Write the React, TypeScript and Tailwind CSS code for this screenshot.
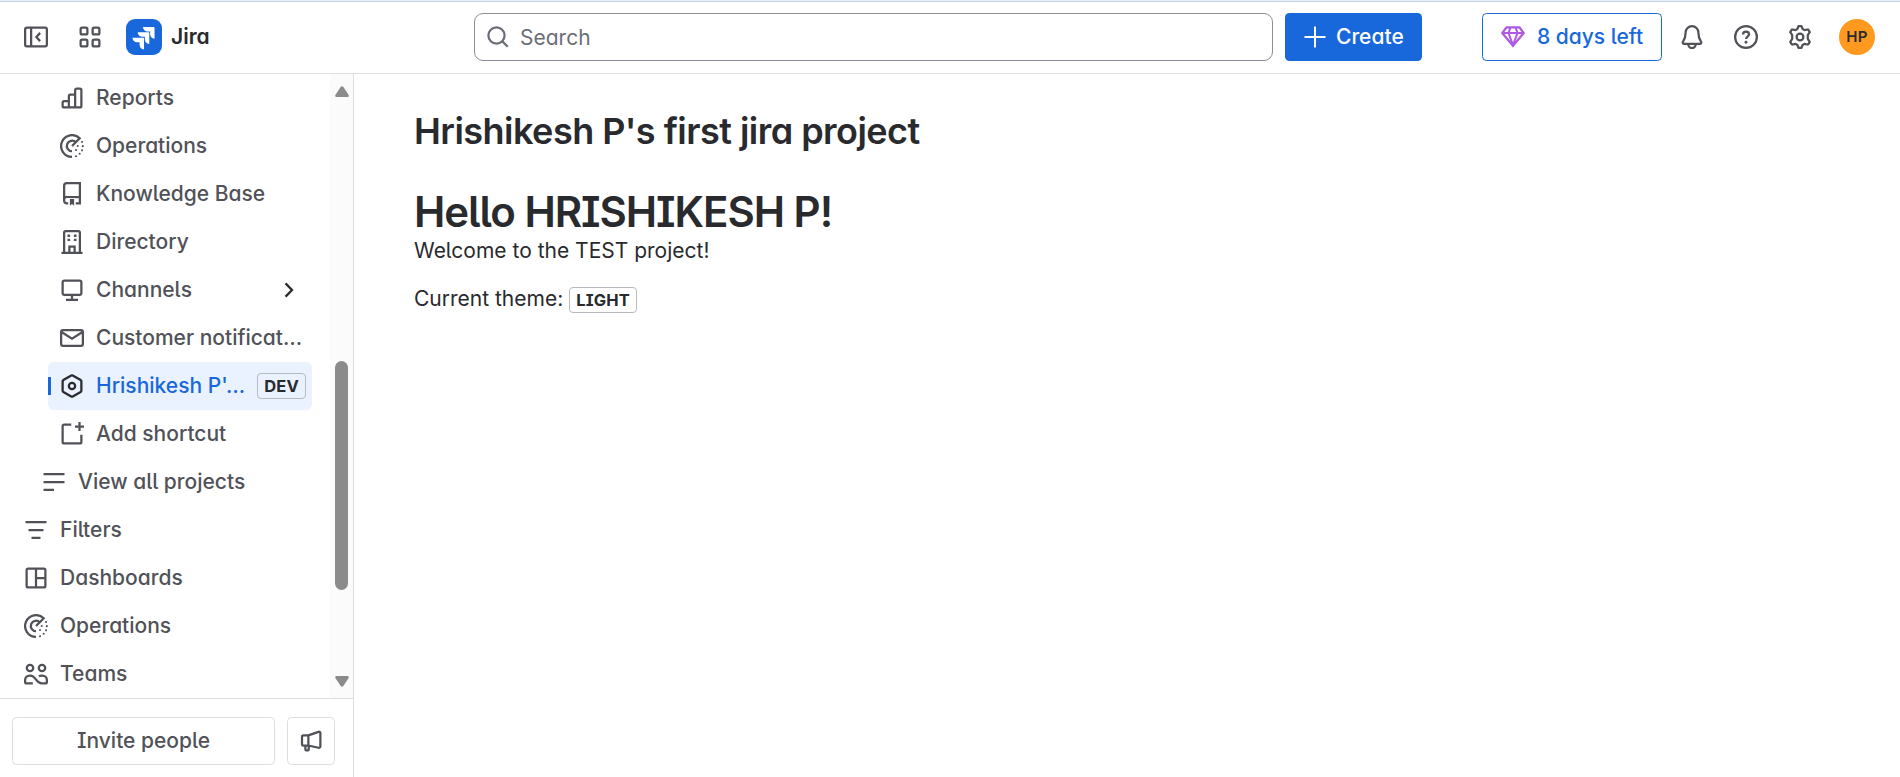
import type { ReactNode } from 'react';

type IconProps = { children: ReactNode; className?: string };

// All icons share a 16 unit grid with 1.5 unit strokes
function Icon({ children, className = 'text-[#505258]' }: IconProps) {
  return (
    <svg
      viewBox="0 0 16 16"
      fill="none"
      stroke="currentColor"
      strokeWidth={1.5}
      className={`w-6 h-6 shrink-0 ${className}`}
    >
      {children}
    </svg>
  );
}

const icons = {
  collapse: (
    <>
      <rect x="0.75" y="1.75" width="14.5" height="12.5" rx="1.25" />
      <path d="M4.75 1.75v12.5M10.75 5.25 8.25 8l2.5 2.75" />
    </>
  ),
  apps: (
    <>
      <rect x="1.75" y="1.75" width="4.5" height="4.5" rx="1" />
      <rect x="9.75" y="1.75" width="4.5" height="4.5" rx="1" />
      <rect x="1.75" y="9.75" width="4.5" height="4.5" rx="1" />
      <rect x="9.75" y="9.75" width="4.5" height="4.5" rx="1" />
    </>
  ),
  reports: (
    <path d="M5.9 14.25V10H2.75a1 1 0 0 0-1 1v2.25a1 1 0 0 0 1 1h10.5a1 1 0 0 0 1-1V2.75a1 1 0 0 0-1-1h-2.15a1 1 0 0 0-1 1v11.5M10.1 5.75H6.9a1 1 0 0 0-1 1V10" />
  ),
  operations: (
    <>
      <path d="M8 15.25A7.25 7.25 0 1 1 13.13 2.87L8 8" />
      <path d="M8 11.5A3.5 3.5 0 1 1 10.5 5.5" />
      <g fill="currentColor" stroke="none">
        <circle cx="14.7" cy="5.3" r=".7" />
        <circle cx="15.2" cy="8.1" r=".7" />
        <circle cx="14.7" cy="10.9" r=".7" />
        <circle cx="13.1" cy="13.2" r=".7" />
        <circle cx="10.7" cy="14.8" r=".7" />
        <circle cx="11.8" cy="8" r=".7" />
        <circle cx="10.7" cy="10.7" r=".7" />
      </g>
    </>
  ),
  knowledge: (
    <>
      <path d="M5.5 14.25h-1a1.75 1.75 0 0 1-1.75-1.75V2.5A1.75 1.75 0 0 1 4.5.75h8.75v13.5H10.5M2.75 12A1.75 1.75 0 0 1 4.5 10h8.75M12 14.25h2" />
      <path d="M6.6 11.3h2.8v4.5L8 14.7l-1.4 1.1z" fill="currentColor" stroke="none" />
    </>
  ),
  directory: (
    <>
      <path d="M1 15.25h14M2.75 15.25V1.75a1 1 0 0 1 1-1h8.5a1 1 0 0 1 1 1v13.5M6.25 15v-4h3.5v4" />
      <path d="M5 3h1.75v1.6H5zM9.25 3H11v1.6H9.25zM5 5.75h1.75v1.6H5zM9.25 5.75H11v1.6H9.25z" fill="currentColor" stroke="none" />
    </>
  ),
  channels: (
    <>
      <rect x="1.75" y="1.75" width="12.5" height="9.5" rx="1.25" />
      <path d="M8 11.25v3M4 14.5h8" />
    </>
  ),
  mail: (
    <>
      <rect x="0.75" y="2.75" width="14.5" height="10.5" rx="1.25" />
      <path d="m1 4 7 4.5L15 4" />
    </>
  ),
  hexagon: (
    <>
      <path d="M7.5 1.05a1 1 0 0 1 1 0l5.25 3a1 1 0 0 1 .5.87v6.16a1 1 0 0 1-.5.87l-5.25 3a1 1 0 0 1-1 0l-5.25-3a1 1 0 0 1-.5-.87V4.92a1 1 0 0 1 .5-.87z" />
      <circle cx="8" cy="8" r="2.1" />
    </>
  ),
  addShortcut: (
    <path d="M7.5 1.75H2.75a1 1 0 0 0-1 1v10.5a1 1 0 0 0 1 1h10.5a1 1 0 0 0 1-1V8.5M13 0v6M10 3h6" />
  ),
  list: <path d="M1 2.75h14M1 8h14M1 13.25h7" />,
  filters: <path d="M1 2.75h14M3 8h10M5 13.25h6" />,
  dashboards: (
    <>
      <rect x="1.75" y="1.75" width="12.5" height="12.5" rx="1" />
      <path d="M8 1.75v12.5M8 8h6.25" />
    </>
  ),
  teams: (
    <>
      <circle cx="4" cy="4" r="2.15" />
      <circle cx="12" cy="4" r="2.15" />
      <path d="M5.9 14.25H1.75a1 1 0 0 1-1-1V12a3 3 0 0 1 3-3h.5c3.7 0 3.7 5.25 7.5 5.25h2.5a1 1 0 0 0 1-1V12a3 3 0 0 0-3-3h-.5c-.7 0-1.3.2-1.8.6" />
    </>
  ),
  megaphone: (
    <path d="M6.25 4.25H3a1 1 0 0 0-1 1V10a1 1 0 0 0 1 1h3.25zm0 0 6.7-2.35a.95.95 0 0 1 1.3.85v8.9a.95.95 0 0 1-1.3.85L6.25 11M4.25 11v2.25a1 1 0 0 0 1 1h.25a1 1 0 0 0 1-1V11" />
  ),
  search: (
    <>
      <circle cx="7" cy="7" r="5.4" />
      <path d="m10.9 10.9 3.6 3.6" />
    </>
  ),
  bell: (
    <>
      <path d="M8 .75A4.25 4.25 0 0 0 3.75 5c0 3.2-.9 4.9-1.8 6.2-.3.5-.1 1.3.6 1.3h10.9c.7 0 .9-.8.6-1.3-.9-1.3-1.8-3-1.8-6.2A4.25 4.25 0 0 0 8 .75z" />
      <path d="M5.5 12.9a2.5 2.5 0 0 0 5 0" />
    </>
  ),
  help: (
    <>
      <circle cx="8" cy="8" r="7.25" />
      <path d="M6 6.3C6 5.1 6.9 4.4 8 4.4s2 .7 2 1.8c0 1.5-2 1.5-2 3.2" />
      <circle cx="8" cy="11.5" r=".95" fill="currentColor" stroke="none" />
    </>
  ),
  settings: (
    <>
      <path
        strokeLinejoin="round"
        d="M7 .75h2l.7 1.9 1.3.75 2-.4a.6.6 0 0 1 .6.3l.9 1.5-1.3 1.9v2.6l1.3 1.9-.9 1.5a.6.6 0 0 1-.6.3l-2-.4-1.3.75-.7 1.9H7l-.7-1.9-1.3-.75-2 .4a.6.6 0 0 1-.6-.3l-.9-1.5 1.3-1.9V6.7L1.5 4.8l.9-1.5a.6.6 0 0 1 .6-.3l2 .4 1.3-.75z"
      />
      <circle cx="8" cy="8" r="2.25" />
    </>
  ),
  gem: (
    <>
      <path strokeLinejoin="round" d="M3.75 1.5h8.5L15.2 5.4 8 13.9.8 5.4z" />
      <path strokeWidth={1.35} d="M1 5.4h14M6.3 1.5 5 5.4l3 8 3-8-1.3-3.9" />
    </>
  ),
};

type NavItem = {
  label: string;
  icon: ReactNode;
  indent: string;
  expandable?: boolean;
  selected?: boolean;
};

const navItems: NavItem[] = [
  { label: 'Reports', icon: icons.reports, indent: 'ml-12' },
  { label: 'Operations', icon: icons.operations, indent: 'ml-12' },
  { label: 'Knowledge Base', icon: icons.knowledge, indent: 'ml-12' },
  { label: 'Directory', icon: icons.directory, indent: 'ml-12' },
  { label: 'Channels', icon: icons.channels, indent: 'ml-12', expandable: true },
  { label: 'Customer notificat…', icon: icons.mail, indent: 'ml-12' },
  { label: "Hrishikesh P'…", icon: icons.hexagon, indent: 'ml-12', selected: true },
  { label: 'Add shortcut', icon: icons.addShortcut, indent: 'ml-12' },
  { label: 'View all projects', icon: icons.list, indent: 'ml-[30px]' },
  { label: 'Filters', icon: icons.filters, indent: 'ml-3' },
  { label: 'Dashboards', icon: icons.dashboards, indent: 'ml-3' },
  { label: 'Operations', icon: icons.operations, indent: 'ml-3' },
  { label: 'Teams', icon: icons.teams, indent: 'ml-3' },
];

function Lozenge({ children }: { children: ReactNode }) {
  return (
    <span className="inline-flex items-center h-[26px] px-1.5 shrink-0 border border-[#b7b9be] rounded-[4px] text-[16.5px] leading-none font-bold tracking-[0.15px] text-[#292a2e]">
      {children}
    </span>
  );
}

function NavRow({ label, icon, indent, expandable, selected }: NavItem) {
  return (
    <li
      className={`relative h-12 shrink-0 mr-[18px] pl-3 pr-1.5 flex items-center rounded-md font-medium ${indent} ${
        selected ? 'bg-[#e9f2fe] text-[#1868db]' : 'text-[#505258]'
      }`}
    >
      {selected && <span className="absolute left-0 top-[15px] w-[3px] h-[18px] bg-[#1868db]" />}
      <Icon className={selected ? 'text-[#292a2e]' : 'text-[#505258]'}>{icon}</Icon>
      <span className="ml-3 flex-1 whitespace-nowrap">{label}</span>
      {selected && <Lozenge>DEV</Lozenge>}
      {expandable && (
        <Icon className="text-[#292a2e] mr-[5px]">
          <path d="m5.7 3.6 4.3 4.4-4.3 4.4" />
        </Icon>
      )}
    </li>
  );
}

function Scrollbar() {
  return (
    <div className="w-[23px] shrink-0 bg-[#fbfbfb] flex flex-col items-center">
      <svg viewBox="0 0 16 12" className="w-4 h-3 mt-3 shrink-0" fill="#8b8b8b">
        <path d="M6.5 1.2a2 2 0 0 1 3 0l5 7.6c.7 1.1 0 2.2-1.2 2.2H2.7c-1.2 0-1.9-1.1-1.2-2.2z" />
      </svg>
      <div className="mt-[263px] w-[13px] h-[229px] rounded-full bg-[#8b8b8b]" />
      <svg viewBox="0 0 16 12" className="w-4 h-3 mt-auto mb-[11px] shrink-0" fill="#8b8b8b">
        <path d="M6.5 10.8a2 2 0 0 0 3 0l5-7.6c.7-1.1 0-2.2-1.2-2.2H2.7c-1.2 0-1.9 1.1-1.2 2.2z" />
      </svg>
    </div>
  );
}

function Header() {
  return (
    <header className="h-[74px] shrink-0 border-b border-b-[#dddee1] flex flex-col">
      <div className="h-0.5 shrink-0 bg-[#e4effa] border-b border-b-[#c4d3e3]" />
      <div className="h-[70px] flex items-center pl-6 pr-[25px]">
        <Icon>{icons.collapse}</Icon>
        <Icon className="text-[#505258] ml-[30px]">{icons.apps}</Icon>
        <svg viewBox="0 0 24 24" className="w-9 h-9 ml-6 shrink-0">
          <rect width="24" height="24" rx="6" fill="#1868db" />
          <path
            fill="#fff"
            d="M9.051 15.434H7.734c-1.988 0-3.413-1.218-3.413-3h7.085c.367 0 .605.26.605.63v7.13c-1.772 0-2.96-1.435-2.96-3.434zm3.5-3.543h-1.318c-1.987 0-3.413-1.196-3.413-2.978h7.085c.367 0 .627.239.627.608v7.13c-1.772 0-2.981-1.435-2.981-3.434zm3.52-3.521h-1.317c-1.987 0-3.413-1.217-3.413-3h7.085c.367 0 .605.262.605.61v7.129c-1.771 0-2.96-1.435-2.96-3.434z"
          />
        </svg>
        <span className="ml-[9px] w-[303px] font-semibold text-[#292a2e]">Jira</span>
        <div className="w-[799px] h-12 border border-[#8c8f97] rounded-[9px] flex items-center pl-[11px] gap-2.5 text-[#6b6e76]">
          <Icon className="text-[#6b6e76]">{icons.search}</Icon>
          <span className="pt-0.5">Search</span>
        </div>
        <button className="ml-3 w-[137px] h-12 rounded-[4.5px] bg-[#1868db] text-white font-medium flex items-center pl-[18px] gap-[9px]">
          <Icon className="text-white">
            <path strokeWidth={1.3} d="M8 1v14M1 8h14" />
          </Icon>
          Create
        </button>
        <button className="ml-[60px] w-[180px] h-12 rounded-[4.5px] border border-[#1868db] text-[#1868db] font-medium flex items-center pl-[18px] gap-3">
          <Icon className="text-[#af59e1]">{icons.gem}</Icon>
          8 days left
        </button>
        <div className="ml-[18px] flex items-center gap-[30px]">
          <Icon>{icons.bell}</Icon>
          <Icon>{icons.help}</Icon>
          <Icon>{icons.settings}</Icon>
        </div>
        <span className="ml-[27px] w-9 h-9 rounded-full bg-[#ff991f] flex items-center justify-center text-[15px] tracking-[0.2px] font-semibold text-[#292a2e]">
          HP
        </span>
      </div>
    </header>
  );
}

export default function App() {
  return (
    <div className="h-screen flex flex-col overflow-hidden bg-white text-[21px] leading-[30px] text-[#292a2e] [font-family:Inter,sans-serif] [font-feature-settings:'cv05','cv08','cv11']">
      <Header />
      <div className="flex-1 min-h-0 flex">
        <aside className="w-[354px] shrink-0 border-r border-[#dddee1] flex flex-col">
          <div className="flex-1 min-h-0 flex overflow-hidden">
            <ul className="flex-1 min-w-0 flex flex-col">
              {navItems.map((item, i) => (
                <NavRow key={i} {...item} />
              ))}
            </ul>
            <Scrollbar />
          </div>
          <div className="h-[79px] shrink-0 border-t border-[#dddee1] flex items-center gap-3 pl-3 pt-[6px]">
            <button className="w-[263px] h-12 border border-[#dddee1] rounded-[4.5px] font-medium text-[#505258]">
              Invite people
            </button>
            <button className="w-12 h-12 border border-[#dddee1] rounded-[4.5px] flex items-center justify-center">
              <Icon>{icons.megaphone}</Icon>
            </button>
          </div>
        </aside>
        <main className="flex-1 pl-[60px] pt-9">
          <h1 className="text-[36px] leading-[42px] font-semibold tracking-[-0.53px]">Hrishikesh P's first jira project</h1>
          <h2 className="mt-9 text-[42px] leading-[48px] font-semibold tracking-[-1.03px]">Hello HRISHIKESH P!</h2>
          <p className="leading-[30px]">Welcome to the TEST project!</p>
          <p className="mt-[18px] leading-[30px] flex items-center gap-1.5">
            Current theme:
            <span className="flex pt-0.5">
              <Lozenge>LIGHT</Lozenge>
            </span>
          </p>
        </main>
      </div>
    </div>
  );
}
